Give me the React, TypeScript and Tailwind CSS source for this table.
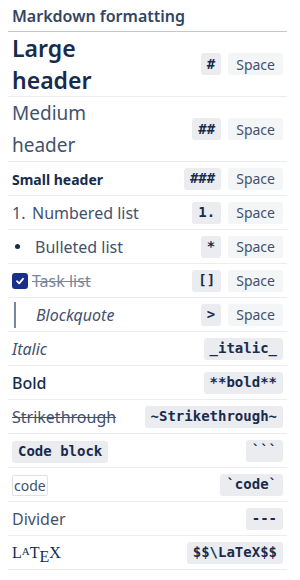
import { ReactNode } from 'react';

const sans = { fontFamily: '"Noto Sans", Roboto, sans-serif' };
const mono = { fontFamily: '"DejaVu Sans Mono", "Liberation Mono", monospace' };

function Key({ children }: { children: ReactNode }) {
  return (
    <span
      className="inline-flex h-[22px] items-center rounded-[3px] bg-[#ebecf0] px-[6px] text-[14px] font-bold text-[#172b4d]"
      style={mono}
    >
      {children}
    </span>
  );
}

function SpaceKey() {
  return (
    <span className="inline-flex h-[22px] items-center rounded-[3px] bg-[#f4f5f7] px-[8px] text-[14px] text-[#42526e]">
      Space
    </span>
  );
}

function Row({ label, keys, tall }: { label: ReactNode; keys: ReactNode; tall?: boolean }) {
  return (
    <div
      className={`flex items-center justify-between border-b border-[#ebecf0] px-1 ${tall ? 'h-[65px]' : 'h-[34px]'}`}
    >
      <div className="min-w-0">{label}</div>
      <div className="flex shrink-0 items-center gap-[7px]">{keys}</div>
    </div>
  );
}

function Check() {
  return (
    <span className="mr-[4px] inline-flex h-4 w-4 items-center justify-center rounded-[3px] bg-[#1a2f8a]">
      <svg width="10" height="10" viewBox="0 0 10 10" fill="none">
        <path d="M2 5.2 L4.2 7.3 L8 2.8" stroke="white" strokeWidth="1.8" strokeLinecap="round" strokeLinejoin="round" />
      </svg>
    </span>
  );
}

// TeX-style logo: small raised A, lowered E
function LatexLogo() {
  return (
    <span className="inline-flex items-baseline text-[16px] text-[#172b4d]" style={{ fontFamily: '"Liberation Serif", serif' }}>
      <span>L</span>
      <span className="relative -top-[3px] text-[11px]">A</span>
      <span>T</span>
      <span className="relative top-[4px]">E</span>
      <span>X</span>
    </span>
  );
}

export default function App() {
  return (
    <div className="w-[300px] bg-white pl-2 pr-[13px] text-[#172b4d]" style={sans}>
      <div className="flex h-[32px] items-center border-b border-[#c1c7d0] px-1 text-[16px] font-semibold text-[#344563]">
        Markdown formatting
      </div>

      <Row
        tall
        label={<div className="text-[23px] font-semibold leading-[32px]">Large<br />header</div>}
        keys={<><Key>#</Key><SpaceKey /></>}
      />
      <Row
        tall
        label={<div className="text-[19px] leading-[32px] text-[#42526e]">Medium<br />header</div>}
        keys={<><Key>##</Key><SpaceKey /></>}
      />
      <Row
        label={<span className="text-[14px] font-bold">Small header</span>}
        keys={<><Key>###</Key><SpaceKey /></>}
      />
      <Row
        label={
          <span className="flex items-center text-[16px] text-[#42526e]">
            <span className="w-[20px]">1.</span>Numbered list
          </span>
        }
        keys={<><Key>1.</Key><SpaceKey /></>}
      />
      <Row
        label={
          <span className="flex items-center text-[16px] text-[#42526e]">
            <span className="ml-[3px] mr-[15px] h-[5px] w-[5px] rounded-full bg-[#172b4d]" />Bulleted list
          </span>
        }
        keys={<><Key>*</Key><SpaceKey /></>}
      />
      <Row
        label={
          <span className="flex items-center text-[16px] text-[#7a869a] line-through">
            <Check />Task list
          </span>
        }
        keys={<><Key>[]</Key><SpaceKey /></>}
      />
      <Row
        label={
          <span className="flex items-center text-[16px] italic text-[#42526e]">
            <span className="ml-[2px] mr-[20px] h-[26px] w-[2px] bg-[#7a869a]" />Blockquote
          </span>
        }
        keys={<><Key>&gt;</Key><SpaceKey /></>}
      />
      <Row label={<span className="text-[16px] italic text-[#42526e]">Italic</span>} keys={<Key>_italic_</Key>} />
      <Row label={<span className="text-[16px] font-medium">Bold</span>} keys={<Key>**bold**</Key>} />
      <Row
        label={<span className="text-[16px] text-[#42526e] line-through">Strikethrough</span>}
        keys={<Key>~Strikethrough~</Key>}
      />
      <Row label={<Key>Code block</Key>} keys={<Key>```</Key>} />
      <Row
        label={
          <span className="inline-flex h-[21px] items-center rounded-[2px] border border-[#dfe1e6] px-[1px] text-[14px] text-[#42526e]">
            code
          </span>
        }
        keys={<Key>`code`</Key>}
      />
      <Row label={<span className="text-[16px] text-[#42526e]">Divider</span>} keys={<Key>---</Key>} />
      <Row label={<LatexLogo />} keys={<Key>$$\LaTeX$$</Key>} />
    </div>
  );
}
